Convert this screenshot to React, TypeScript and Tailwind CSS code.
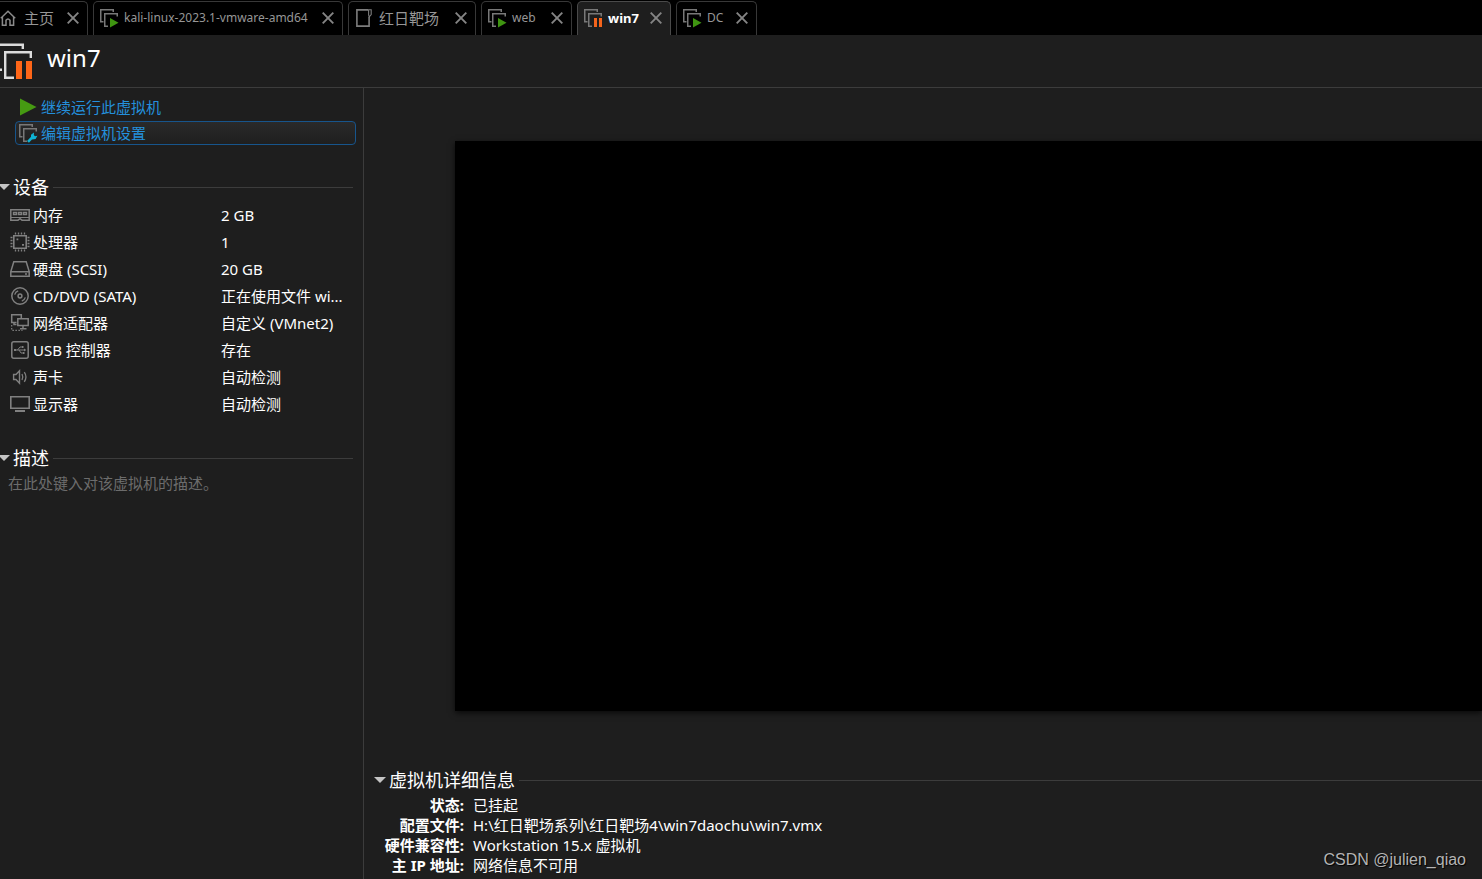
import { useState } from "react";
import type { ReactNode } from "react";

type TabKind = "home" | "folder" | "running" | "suspended";

function VmFrames() {
  return (
    <g fill="none" stroke="#787878" strokeWidth="1.5">
      <path d="M4.5 13.75H1.75V1.75H14.25V4" />
      <path d="M18.25 8.5V5.75H5.75V18.25H9" />
    </g>
  );
}

function TabIcon({ kind }: { kind: TabKind }) {
  if (kind === "home") {
    return (
      <svg width="17" height="18" viewBox="0 0 17 18" fill="none" stroke="#8a8a8a" strokeWidth="1.5" className="shrink-0" aria-hidden="true">
        <path d="M0.8 9.3L8 2.2L15.2 9.3" />
        <path d="M2.4 8V16.3H6V11.2Q8 8.6 10 11.2V16.3H13.6V8" />
      </svg>
    );
  }
  if (kind === "folder") {
    return (
      <svg width="20" height="20" viewBox="0 0 20 20" fill="none" stroke="#7d7d7d" strokeWidth="1.6" className="shrink-0" aria-hidden="true">
        <path d="M14 1.9H2.9V18.1H15.1V9" />
        <path d="M13.6 1.7H17.2V6.5L15.2 8.8L14.6 7V1.7" strokeWidth="1.1" />
      </svg>
    );
  }
  return (
    <svg width="20" height="20" viewBox="0 0 20 20" className="shrink-0" aria-hidden="true">
      <VmFrames />
      {kind === "running" ? (
        <path d="M11 10L19.5 14.8L11 19.6Z" fill="#3f9511" />
      ) : (
        <path d="M11 10H14V19H11ZM16 10H19V19H16Z" fill="#f4641c" />
      )}
    </svg>
  );
}

function CloseIcon() {
  return (
    <svg width="12" height="12" viewBox="0 0 12 12" stroke="#858585" strokeWidth="1.9" aria-hidden="true">
      <path d="M0.7 0.7L11.3 11.3M11.3 0.7L0.7 11.3" />
    </svg>
  );
}

const tabs: { label: string; kind: TabKind; width: string; text: string }[] = [
  { label: "主页", kind: "home", width: "w-22 pl-0 gap-[7px]", text: "text-[15px]" },
  { label: "kali-linux-2023.1-vmware-amd64", kind: "running", width: "w-[250px] pl-[5px] gap-[5px]", text: "text-xs" },
  { label: "红日靶场", kind: "folder", width: "w-32 pl-[5px] gap-[5px]", text: "text-[15px]" },
  { label: "web", kind: "running", width: "w-[91px] pl-[5px] gap-[5px]", text: "text-xs" },
  { label: "win7", kind: "suspended", width: "w-[94px] pl-[5px] gap-[5px]", text: "text-[13px]" },
  { label: "DC", kind: "running", width: "w-[81px] pl-[5px] gap-[5px]", text: "text-xs" },
];

function DeviceIcon({ children }: { children: ReactNode }) {
  return (
    <svg width="20" height="20" viewBox="0 0 20 20" fill="none" stroke="#808080" strokeWidth="1.5" className="shrink-0" aria-hidden="true">
      {children}
    </svg>
  );
}

const devices: { name: string; value: string; icon: ReactNode }[] = [
  {
    name: "内存",
    value: "2 GB",
    icon: (
      <>
        <path d="M0.8 4.8H19.2V15.2H12L10 13.6L8 15.2H0.8Z" />
        <path d="M1 12.5H19" strokeWidth="1" />
        <path d="M3.5 7.5H6.5V9.5H3.5ZM8.5 7.5H11.5V9.5H8.5ZM13.5 7.5H16.5V9.5H13.5Z" strokeWidth="1.4" />
      </>
    ),
  },
  {
    name: "处理器",
    value: "1",
    icon: (
      <>
        <path d="M3.8 3.8H16.2V16.2H3.8Z" strokeWidth="1.6" />
        <path d="M5.5 0.5V2.5M8.5 0.5V2.5M11.5 0.5V2.5M14.5 0.5V2.5M5.5 17.5V19.5M8.5 17.5V19.5M11.5 17.5V19.5M14.5 17.5V19.5M0.5 5.5H2.5M0.5 8.5H2.5M0.5 11.5H2.5M0.5 14.5H2.5M17.5 5.5H19.5M17.5 8.5H19.5M17.5 11.5H19.5M17.5 14.5H19.5" strokeWidth="1.3" />
        <path d="M6.5 7.3H8.3M12 12.8H14" strokeWidth="1.8" />
      </>
    ),
  },
  {
    name: "硬盘 (SCSI)",
    value: "20 GB",
    icon: (
      <>
        <path d="M3.8 2.8H16.2L19.2 12.5V17.2H0.8V12.5Z" />
        <path d="M0.8 12.7H19.2M15 15H17" />
      </>
    ),
  },
  {
    name: "CD/DVD (SATA)",
    value: "正在使用文件 wi...",
    icon: (
      <>
        <circle cx="10" cy="10" r="8.2" />
        <circle cx="10" cy="10" r="1.9" />
        <path d="M4.7 8.6Q5.4 5.8 8.2 4.8M15.3 11.4Q14.6 14.2 11.8 15.2" strokeWidth="1.3" />
      </>
    ),
  },
  {
    name: "网络适配器",
    value: "自定义 (VMnet2)",
    icon: (
      <>
        <path d="M6.5 9.4H1.7V1.7H11.3V5" />
        <path d="M7.8 5.8H18.2V12.6H7.8ZM13 13V15.5M10 15.8H16.5M4 9.5V11.5H6.5" />
        <path d="M1.7 12V17.3H12.5" strokeDasharray="1.5 1.5" strokeWidth="1.2" />
      </>
    ),
  },
  {
    name: "USB 控制器",
    value: "存在",
    icon: (
      <>
        <rect x="1.8" y="1.8" width="16.4" height="16.4" rx="2" />
        <path d="M5 10H15M7.5 10L10 7H12M9 10L11 13H13" strokeWidth="1" />
        <path d="M4 9H6V11H4ZM14 8.5L16.3 10L14 11.5ZM12 6H13.5V8H12ZM13 12H14.5V14H13Z" fill="#808080" stroke="none" />
      </>
    ),
  },
  {
    name: "声卡",
    value: "自动检测",
    icon: (
      <>
        <path d="M3.6 7.5H6L9.5 3.8V16.2L6 12.5H3.6Z" strokeWidth="1.4" />
        <path d="M12 7Q13.6 10 12 13M14.3 5.2Q17.6 10 14.3 14.8" strokeWidth="1.3" />
      </>
    ),
  },
  {
    name: "显示器",
    value: "自动检测",
    icon: (
      <>
        <path d="M0.8 2.8H19.2V14.2H0.8Z" strokeWidth="1.6" />
        <path d="M5 17H15" strokeWidth="2" />
      </>
    ),
  },
];

const details = [
  { label: "状态:", value: "已挂起" },
  { label: "配置文件:", value: "H:\\红日靶场系列\\红日靶场4\\win7daochu\\win7.vmx" },
  { label: "硬件兼容性:", value: "Workstation 15.x 虚拟机" },
  { label: "主 IP 地址:", value: "网络信息不可用" },
];

function SectionHeading({ title, wide = false }: { title: string; wide?: boolean }) {
  return (
    <h2 className="flex h-6 items-center gap-1 text-lg leading-6 text-white">
      <button type="button" className="flex shrink-0 items-center gap-[3px]">
        {wide ? (
          <svg width="12" height="6" viewBox="0 0 12 6" fill="#c4c4c4" aria-hidden="true">
            <path d="M0 0H12L6 6Z" />
          </svg>
        ) : (
          <svg width="10" height="6" viewBox="2 0 10 6" fill="#c4c4c4" aria-hidden="true">
            <path d="M0 0H12L6 6Z" />
          </svg>
        )}
        {title}
      </button>
      <span className="h-px flex-1 bg-[#3c3c3c]" />
    </h2>
  );
}

export default function App() {
  const [active, setActive] = useState("win7");
  const [description, setDescription] = useState("");

  return (
    <div className="relative flex min-h-screen flex-col overflow-x-hidden bg-[#1e1e1e] font-['Noto_Sans','Noto_Sans_CJK_SC',sans-serif] text-[15px] leading-5 text-white">
      <nav className="flex h-[35px] gap-[5px] bg-black pt-px" aria-label="虚拟机">
        {tabs.map((tab) => (
          <div
            key={tab.label}
            className={`flex shrink-0 items-center rounded-t-[5px] border border-b-0 pr-2 pb-px ${tab.width} ${
              tab.kind === "home" ? "rounded-tl-none border-l-0" : ""
            } ${active === tab.label ? "border-[#4a4a4a] bg-[#1e1e1e]" : "border-[#383838]"}`}
          >
            <button
              type="button"
              onClick={() => setActive(tab.label)}
              className={`flex min-w-0 flex-1 items-center whitespace-nowrap gap-[inherit] ${tab.text} ${
                active === tab.label ? "font-bold text-white" : "text-[#969696]"
              }`}
            >
              <TabIcon kind={tab.kind} />
              {tab.label}
            </button>
            <button type="button" aria-label={`关闭 ${tab.label}`} className="shrink-0">
              <CloseIcon />
            </button>
          </div>
        ))}
      </nav>

      <header className="flex h-[53px] items-start gap-[15px] border-b border-[#3c3c3c] pt-2">
        <svg width="32" height="37" viewBox="0 0 32 37" fill="none" stroke="#dcdcdc" strokeWidth="2.4" aria-hidden="true">
          <path d="M0 1.7H22.8V6M0 26.8H2" />
          <path d="M30.8 15V9.2H5.2V34.8H14" />
          <path d="M16 18H22V36H16ZM26 18H32V36H26Z" fill="#ff6618" stroke="none" />
        </svg>
        <h1 className="text-2xl leading-[30px]">win7</h1>
      </header>

      <div className="flex flex-1">
        <aside className="w-[364px] shrink-0 border-r border-[#3c3c3c] pt-[6px]">
          <div className="flex flex-col gap-[2px] pr-[7px] pl-[15px] text-[#2490dc]">
            <button type="button" className="flex h-[25px] items-center gap-1 pl-1">
              <svg width="18" height="18" viewBox="0 0 18 18" fill="#469a12" aria-hidden="true">
                <path d="M1 0.5L17.5 9L1 17.5Z" />
              </svg>
              继续运行此虚拟机
            </button>
            <button
              type="button"
              className="flex h-6 items-center gap-[3px] rounded-sm border border-[#17558c] bg-linear-to-b from-[#2a2a2a] to-[#1f1f1f] pl-[2px]"
            >
              <svg width="20" height="20" viewBox="0 0 20 20" aria-hidden="true">
                <VmFrames />
                <path d="M10 18.8L14.2 14.4" stroke="#0fb4d4" strokeWidth="2.6" />
                <path d="M13 15.5V11.8L16 9.4L15.8 12L17 13.2L19.4 12.8L17.6 16L14.5 16.5Z" fill="#0fb4d4" />
              </svg>
              编辑虚拟机设置
            </button>
          </div>

          <section className="mt-[30px] pr-[10px]">
            <SectionHeading title="设备" />
            <table className="mt-[2px] w-full table-fixed text-left">
              <tbody>
                {devices.map((device) => (
                  <tr key={device.name} className="h-[27px]">
                    <th scope="row" className="w-[221px] p-0 pl-[10px] font-normal">
                      <span className="flex items-center gap-[3px]">
                        <DeviceIcon>{device.icon}</DeviceIcon>
                        {device.name}
                      </span>
                    </th>
                    <td className="p-0 whitespace-nowrap">{device.value}</td>
                  </tr>
                ))}
              </tbody>
            </table>
          </section>

          <section className="mt-[29px] pr-[10px]">
            <SectionHeading title="描述" />
            <textarea
              aria-label="描述"
              rows={2}
              value={description}
              onChange={(event) => setDescription(event.target.value)}
              placeholder="在此处键入对该虚拟机的描述。"
              className="mt-[3px] block w-full resize-none bg-transparent pl-2 outline-none placeholder:text-[#6c6c6c]"
            />
          </section>
        </aside>

        <main className="flex min-w-0 flex-1 flex-col">
          <div
            role="img"
            aria-label="win7"
            className="mt-[53px] ml-[91px] min-h-80 flex-1 bg-black shadow-[0_2px_6px_rgba(0,0,0,0.7)]"
          />
          <section className="mt-[57px] pb-1 pl-[10px]">
            <SectionHeading title="虚拟机详细信息" wide />
            <dl className="mt-[3px] grid grid-cols-[90px_1fr] gap-x-[9px]">
              {details.map((item) => (
                <div key={item.label} className="contents">
                  <dt className="text-right font-bold">{item.label}</dt>
                  <dd>{item.value}</dd>
                </div>
              ))}
            </dl>
          </section>
        </main>
      </div>

      <p className="absolute right-4 bottom-[9px] font-['Liberation_Sans',sans-serif] text-base leading-5 text-[#b4b4b4] [text-shadow:1px_1px_1px_#000]">
        CSDN @julien_qiao
      </p>
    </div>
  );
}
